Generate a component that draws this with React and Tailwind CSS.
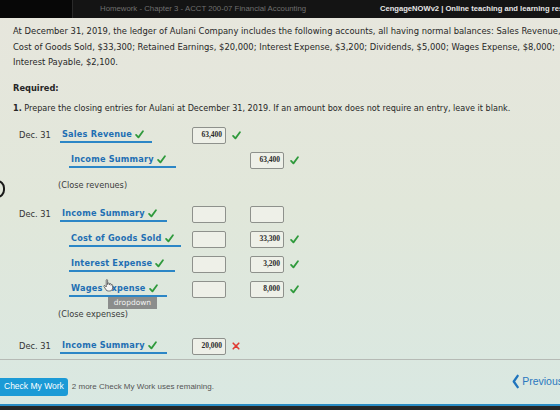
import React from "react";

const verdana = { fontFamily: '"DejaVu Sans", Verdana, sans-serif' };
const arial = { fontFamily: '"Liberation Sans", Arial, sans-serif' };

function Check() {
  return (
    <svg viewBox="0 0 10 10" className="w-[9px] h-[9px] shrink-0">
      <path d="M1.2 5.4 L3.8 8.2 L8.8 1.4" fill="none" stroke="#2f9a3c" strokeWidth="2" strokeLinecap="round" strokeLinejoin="round" />
    </svg>
  );
}

function Cross() {
  return (
    <svg viewBox="0 0 10 10" className="w-[8px] h-[8px] shrink-0">
      <path d="M1.5 1.5 L8.5 8.5 M8.5 1.5 L1.5 8.5" fill="none" stroke="#e03a32" strokeWidth="2" strokeLinecap="round" />
    </svg>
  );
}

function AmountBox({ value }) {
  return (
    <div
      className="w-[34px] h-[17px] border border-[#8e918c] rounded-[2px] bg-[#eef0e8] flex items-center justify-end pr-[3px] text-[7.5px] font-bold text-[#2b2b2b]"
      style={{ fontFamily: '"Liberation Serif", "Times New Roman", serif' }}
    >
      {value}
    </div>
  );
}

// one journal line: date, account dropdown, debit and credit boxes
function EntryRow({ date, account, width, indent, debit, credit, mark, children }) {
  return (
    <div className="h-[25px] flex items-center" style={verdana}>
      <div className="w-[47px] pl-[6px] text-[8.3px] text-[#333]">{date}</div>
      <div className="w-[132px] flex">
        <div
          className={`relative h-[15px] border-b-2 border-[#2c86c6] flex items-center gap-[3px] pl-[2px] ${indent ? "ml-[9px]" : ""}`}
          style={{ width }}
        >
          <span className="text-[8.2px] font-bold text-[#1f6fb3] tracking-[0.2px]">{account}</span>
          <Check />
          {children}
        </div>
      </div>
      <div className="w-[58px] flex items-center gap-[6px]">
        {debit !== undefined && <AmountBox value={debit} />}
        {debit && (mark === "x" ? <Cross /> : <Check />)}
      </div>
      <div className="flex items-center gap-[6px]">
        {credit !== undefined && <AmountBox value={credit} />}
        {credit && <Check />}
      </div>
    </div>
  );
}

function Note({ children }) {
  return (
    <div className="h-[25px] flex items-center pl-[45px] text-[8.2px] text-[#3a3a3a]" style={verdana}>
      {children}
    </div>
  );
}

export default function App() {
  return (
    <div className="w-[560px] h-[410px] overflow-hidden flex flex-col bg-gradient-to-b from-[#e7e6dd] via-[#e1e7da] to-[#d9e8e2]">
      {/* browser tab strip */}
      <div className="h-[18px] flex bg-[#141414] shrink-0" style={arial}>
        <div className="w-[73px] bg-[#070707] border-r border-[#2a2a2a]" />
        <div className="w-[300px] flex items-center pl-[27px] text-[7.8px] text-[#707070] whitespace-nowrap">
          Homework - Chapter 3 - ACCT 200-07 Financial Accounting
        </div>
        <div className="flex-1 flex items-center pl-[7px] text-[7.6px] font-bold text-[#e6e6e6] whitespace-nowrap overflow-hidden">
          CengageNOWv2 | Online teaching and learning resource
        </div>
      </div>

      <div className="flex-1 flex flex-col px-[13px] pt-[6px] text-[#262626]" style={verdana}>
        <p className="text-[8.4px] leading-[15.5px] whitespace-nowrap">
          At December 31, 2019, the ledger of Aulani Company includes the following accounts, all having normal balances: Sales Revenue, $63,400;
          <br />
          Cost of Goods Sold, $33,300; Retained Earnings, $20,000; Interest Expense, $3,200; Dividends, $5,000; Wages Expense, $8,000;
          <br />
          Interest Payable, $2,100.
        </p>
        <p className="mt-[10px] text-[8.3px] leading-[15.5px] font-bold">Required:</p>
        <p className="mt-[4.5px] text-[8.1px] leading-[15.5px] whitespace-nowrap">
          <span className="font-bold">1.</span> Prepare the closing entries for Aulani at December 31, 2019. If an amount box does not require an entry, leave it blank.
        </p>

        <div className="mt-[6.5px] flex flex-col">
          <EntryRow date="Dec. 31" account="Sales Revenue" width="92px" debit="63,400" />
          <EntryRow account="Income Summary" width="107px" indent credit="63,400" />
          <div className="relative">
            <div className="absolute left-[-24px] top-[7px] w-[16px] h-[18px] rounded-full border-2 border-[#1a1a1a]" />
            <Note>(Close revenues)</Note>
          </div>

          <div className="mt-[4px]">
            <EntryRow date="Dec. 31" account="Income Summary" width="107px" debit="" credit="" />
          </div>
          <EntryRow account="Cost of Goods Sold" width="112px" indent debit="" credit="33,300" />
          <EntryRow account="Interest Expense" width="106px" indent debit="" credit="3,200" />
          <EntryRow account="Wages Expense" width="98px" indent debit="" credit="8,000">
            {/* mouse pointer hovering the dropdown */}
            <svg viewBox="0 0 12 14" className="absolute left-[34px] top-[-3px] w-[11px] h-[13px]">
              <path
                d="M3.5 1.2 C3.5 0.4 5 0.4 5 1.2 V6 L5.4 4.6 C5.6 3.9 6.9 4 6.9 4.8 V6.2 L7.3 5.2 C7.6 4.6 8.8 4.8 8.8 5.6 V6.8 L9.1 6.2 C9.4 5.7 10.5 5.9 10.5 6.7 V9.5 C10.5 11.6 9.2 13 7.2 13 H5.8 C4.5 13 3.7 12.3 3 11.2 L1 8 C0.6 7.3 1.5 6.6 2.1 7.2 L3.5 8.6 Z"
                fill="#f4f4f4"
                stroke="#444"
                strokeWidth="0.8"
                strokeLinejoin="round"
              />
            </svg>
            <div
              className="absolute left-[39px] top-[15px] w-[49px] h-[12px] bg-[#8b8d8c] text-[#f2f2f2] text-[7.5px] flex items-center justify-center"
              style={verdana}
            >
              dropdown
            </div>
          </EntryRow>
          <Note>(Close expenses)</Note>

          <div className="mt-[7px]">
            <EntryRow date="Dec. 31" account="Income Summary" width="107px" debit="20,000" mark="x" />
          </div>
        </div>
      </div>

      {/* footer with check button and navigation */}
      <div className="h-[45px] shrink-0 border-t border-[#b6bab5] flex items-start justify-between pt-[18px]" style={arial}>
        <div className="flex items-center gap-[4px]">
          <div className="h-[18px] px-[4px] bg-[#1b9ad6] rounded-r-[3px] text-white text-[8.5px] flex items-center">
            Check My Work
          </div>
          <span className="text-[8px] text-[#555]">2 more Check My Work uses remaining.</span>
        </div>
        <div className="flex items-center gap-[3px] mt-[-4px] mr-[-3px]">
          <svg viewBox="0 0 8 16" className="w-[7px] h-[15px]">
            <path d="M6.5 1.5 L2 8 L6.5 14.5" fill="none" stroke="#1f74bd" strokeWidth="2.6" strokeLinecap="round" strokeLinejoin="round" />
          </svg>
          <span className="text-[10.5px] text-[#2a78bf]">Previous</span>
        </div>
      </div>
      <div className="h-[2px] bg-[#2a8cc4] shrink-0" />
      <div className="h-[6px] bg-[#262626] shrink-0" />
    </div>
  );
}
